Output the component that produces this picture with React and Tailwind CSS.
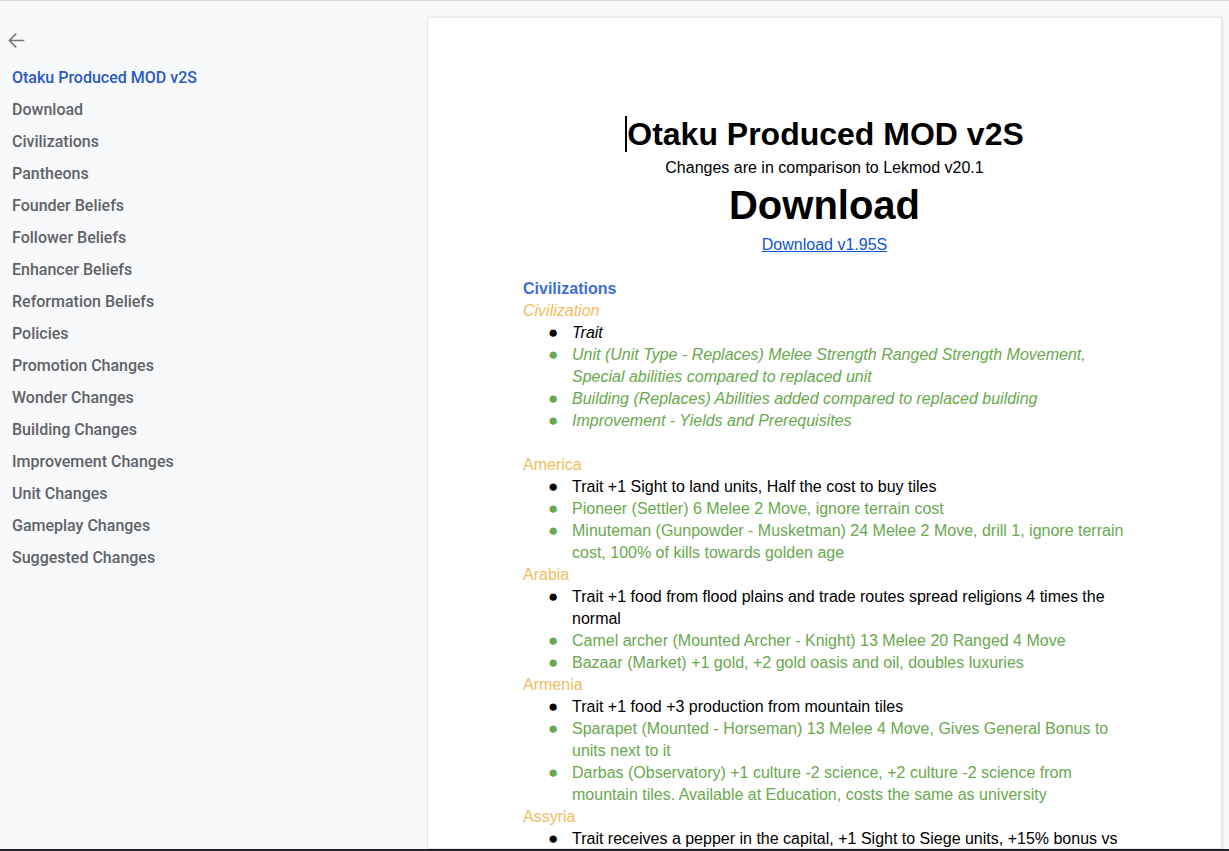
import React from 'react';

const NAV = [
  'Otaku Produced MOD v2S',
  'Download',
  'Civilizations',
  'Pantheons',
  'Founder Beliefs',
  'Follower Beliefs',
  'Enhancer Beliefs',
  'Reformation Beliefs',
  'Policies',
  'Promotion Changes',
  'Wonder Changes',
  'Building Changes',
  'Improvement Changes',
  'Unit Changes',
  'Gameplay Changes',
  'Suggested Changes',
];

const CIVS = [
  {
    name: 'America',
    items: [
      { t: 'Trait +1 Sight to land units, Half the cost to buy tiles', trait: true },
      { t: 'Pioneer (Settler) 6 Melee 2 Move, ignore terrain cost' },
      { t: 'Minuteman (Gunpowder - Musketman) 24 Melee 2 Move, drill 1, ignore terrain cost, 100% of kills towards golden age' },
    ],
  },
  {
    name: 'Arabia',
    items: [
      { t: 'Trait +1 food from flood plains and trade routes spread religions 4 times the normal', trait: true },
      { t: 'Camel archer (Mounted Archer - Knight) 13 Melee 20 Ranged 4 Move' },
      { t: 'Bazaar (Market) +1 gold, +2 gold oasis and oil, doubles luxuries' },
    ],
  },
  {
    name: 'Armenia',
    items: [
      { t: 'Trait +1 food +3 production from mountain tiles', trait: true },
      { t: 'Sparapet (Mounted - Horseman) 13 Melee 4 Move, Gives General Bonus to units next to it' },
      { t: 'Darbas (Observatory) +1 culture -2 science, +2 culture -2 science from mountain tiles. Available at Education, costs the same as university' },
    ],
  },
  {
    name: 'Assyria',
    items: [
      { t: 'Trait receives a pepper in the capital, +1 Sight to Siege units, +15% bonus vs cities for siege units', trait: true },
    ],
  },
];

const Bullet = ({ children, trait, italic }) => (
  <li className={`flex pl-[25px] ${trait ? 'text-black' : 'text-[#6aa84f]'} ${italic ? 'italic' : ''}`}>
    <span className="w-[24px] shrink-0 text-[17px] leading-[22px] not-italic">●</span>
    <span>{children}</span>
  </li>
);

const App = () => {
  return (
    <div className="h-screen w-full flex flex-col overflow-hidden bg-[#f8f9fa] border-t border-[#dadce0]">
      <div className="flex-1 flex min-h-0">

        {/* Sidebar */}
        <aside className="w-[427px] shrink-0 pt-[30px] font-['Roboto',sans-serif]">
          <div className="pl-[7px] h-[18px] flex items-center text-[#757575]">
            <svg width="19" height="19" viewBox="0 0 24 24" fill="none" stroke="currentColor" strokeWidth="2" strokeLinecap="round">
              <path d="M21 12H3M11 4l-8 8 8 8"/>
            </svg>
          </div>
          <nav className="mt-[13px]">
            {NAV.map((n, i) => (
              <div key={n} className={`pl-[12px] h-8 leading-8 text-[16px] font-medium ${i === 0 ? 'text-[#2a5bbf]' : 'text-[#5f6368]'}`}>
                {n}
              </div>
            ))}
          </nav>
        </aside>

        {/* Page */}
        <main className="flex-1 pt-[16px]">
          <div className="w-[795px] h-full bg-white border border-[#e3e5e8] shadow-[1px_0_2px_rgba(60,64,67,0.15)] px-[95px] pt-[96px] font-['Liberation_Sans',Arial,sans-serif] text-[16px] leading-[22px] text-black">
            <h1 className="text-center text-[32px] leading-[40px] font-bold">
              <span className="border-l-2 border-black">Otaku Produced MOD v2S</span>
            </h1>
            <p className="text-center mt-[3px]">Changes are in comparison to Lekmod v20.1</p>
            <h2 className="text-center text-[40px] leading-[46px] font-bold mt-[3px]">Download</h2>
            <p className="text-center mt-[6px]">
              <a className="text-[#1155cc] underline">Download v1.95S</a>
            </p>
            <div className="h-[22px]" />

            <p className="text-[#3c6fd1] font-bold">Civilizations</p>
            <p className="text-[#f0bd5e] italic">Civilization</p>
            <ul>
              <Bullet trait italic>Trait</Bullet>
              <Bullet italic>Unit (Unit Type - Replaces) Melee Strength Ranged Strength Movement, Special abilities compared to replaced unit</Bullet>
              <Bullet italic>Building (Replaces) Abilities added compared to replaced building</Bullet>
              <Bullet italic>Improvement - Yields and Prerequisites</Bullet>
            </ul>
            <div className="h-[22px]" />

            {CIVS.map(c => (
              <div key={c.name}>
                <p className="text-[#f0bd5e]">{c.name}</p>
                <ul>
                  {c.items.map(it => (
                    <Bullet key={it.t} trait={it.trait}>{it.t}</Bullet>
                  ))}
                </ul>
              </div>
            ))}
          </div>
        </main>
      </div>
      <div className="h-[2px] bg-[#202124] shrink-0" />
    </div>
  );
};

export default App;
